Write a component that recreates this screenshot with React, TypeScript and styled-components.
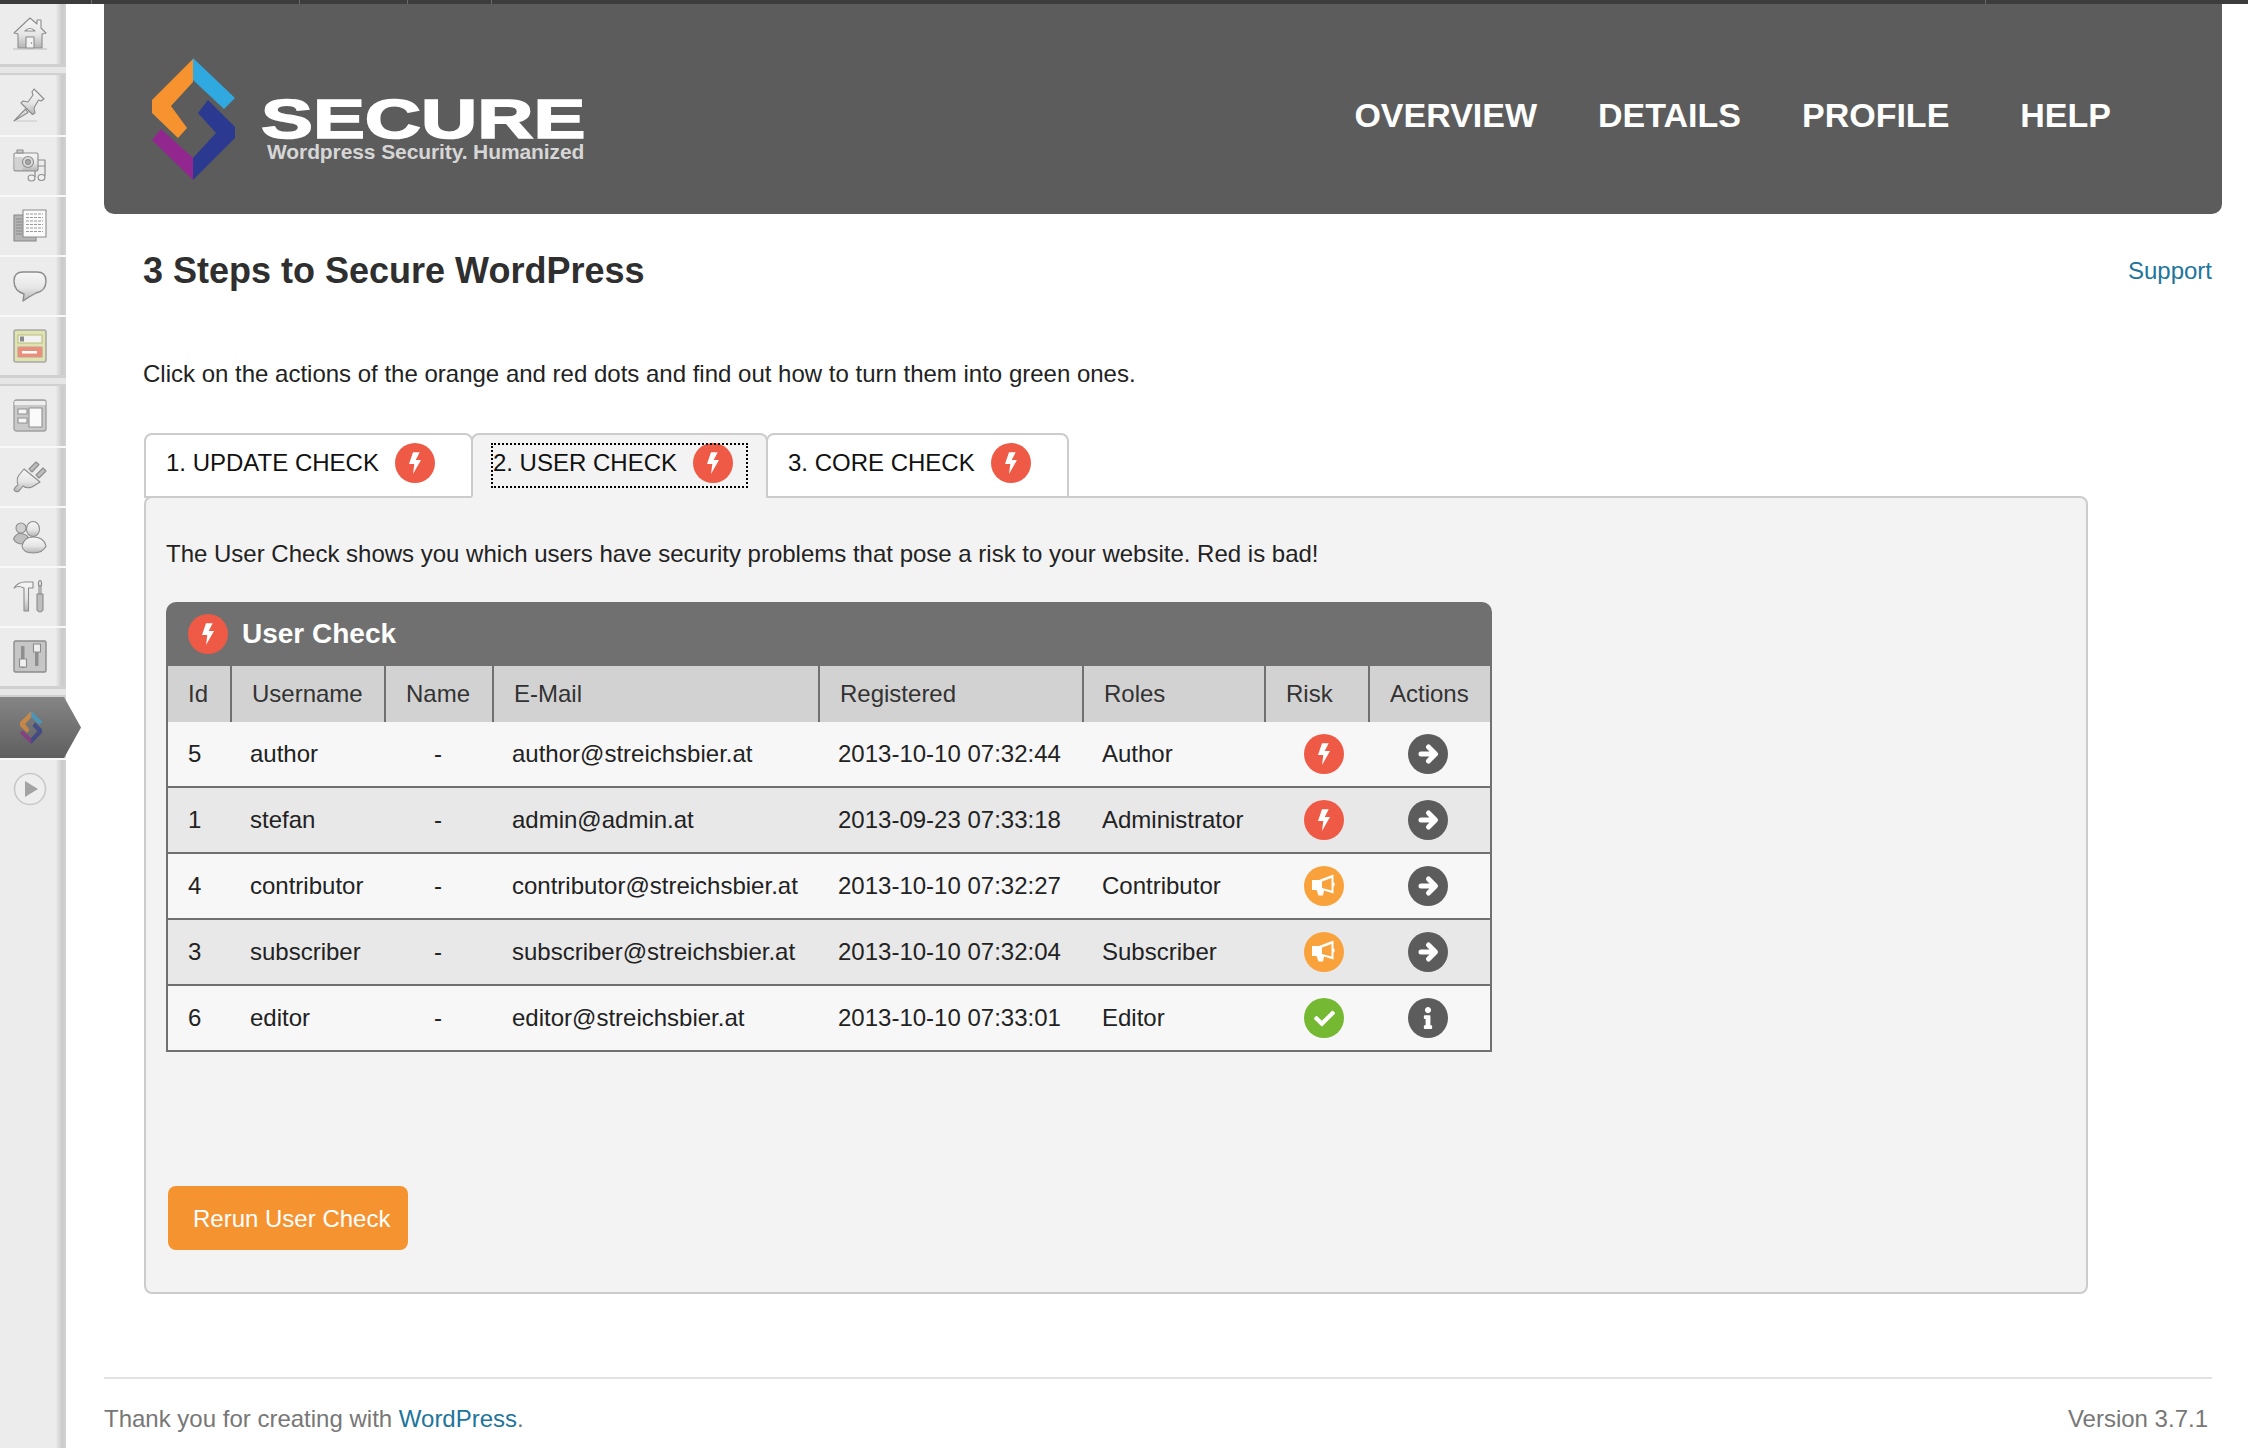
import * as React from 'react';
import styled, { createGlobalStyle } from 'styled-components';
import { FaCheck, FaInfo } from 'react-icons/fa';

const GlobalStyle = createGlobalStyle`
  html, body { margin: 0; padding: 0; background: #fff; }
  body { font-family: "Liberation Sans", Arial, sans-serif; font-size: 24px; color: #333; }
  * { box-sizing: border-box; }
`;

const logoParts = [
  { fill: '#f6932f', points: '193,59 193,82 171,106 187,128 178,138 152,113 152,100' },
  { fill: '#2fa9e0', points: '193,58 235,98 224,109 193,80' },
  { fill: '#2b3990', points: '208,100 235,127 235,138 193,180 193,158 216,133 198,113' },
  { fill: '#92278f', points: '161,129 193,158 193,180 152,140' },
];

const LogoMark = ({ size, muted }: { size: number; muted?: boolean }) => (
  <svg width={(size * 83) / 122} height={size} viewBox="152 58 83 122" opacity={muted ? 0.62 : 1}>
    {logoParts.map((p) => (
      <polygon key={p.fill} fill={p.fill} points={p.points} />
    ))}
  </svg>
);

const Ico = ({ children }: { children: React.ReactNode }) => (
  <svg width={34} height={34} viewBox="0 0 34 34" fill="url(#shade)" stroke="#8c8c8c" strokeWidth="1.1" strokeLinejoin="round">
    {children}
  </svg>
);

const HomeIcon = () => (
  <Ico>
    <defs>
      <linearGradient id="shade" x1="0" y1="0" x2="0" y2="1">
        <stop offset="0" stopColor="#f6f6f6" />
        <stop offset="0.55" stopColor="#e6e6e6" />
        <stop offset="1" stopColor="#b4b4b4" />
      </linearGradient>
    </defs>
    <path d="M1 16 L17 1 L24 7 V3 H28 V11 L33 16 L29 17 V31 H5 V17 Z" />
    <path d="M12 14 Q17 9 22 14 Z" fill="#fff" />
    <rect x="13" y="20" width="8" height="11" fill="#f2f2f2" />
    <circle cx="18.5" cy="26" r="0.7" fill="#777" stroke="none" />
    <path d="M0 32 H34" stroke="#bbb" />
  </Ico>
);
const PinIcon = () => (
  <Ico>
    <path d="M21 1 L31 11 L28 13 L25.5 12 L21 20 L22 25 L19.5 26.5 L8 15 L10 13 L15 14 L20 7 L19 4 Z" />
    <path d="M12.5 21 L1 33 L15 24.5 Z" fill="#dcdcdc" />
    <path d="M3 33 H24" stroke="#ccc" />
  </Ico>
);
const MediaIcon = () => (
  <Ico>
    <path d="M22 11 H32 V27 M22 17 H32 M22 19 V28" fill="none" strokeWidth="1.2" />
    <ellipse cx="18.5" cy="29" rx="3.4" ry="3" fill="#f0f0f0" />
    <ellipse cx="28.5" cy="28.5" rx="3.4" ry="3" fill="#f0f0f0" />
    <rect x="1" y="4" width="24" height="18" rx="1.5" />
    <rect x="4" y="1" width="6" height="3" fill="#ccc" />
    <rect x="1.5" y="8" width="8" height="13" fill="#d2d2d2" stroke="none" />
    <circle cx="15" cy="13" r="5.5" fill="#d8d8d8" />
    <circle cx="15" cy="13" r="2.4" fill="#aaa" />
  </Ico>
);
const PagesIcon = () => (
  <Ico>
    <rect x="1" y="6" width="22" height="26" fill="#b4b4b4" stroke="#888" />
    <path d="M3 10 H9 M3 13 H9 M3 16 H9 M3 19 H9 M3 22 H9 M3 25 H9" stroke="#8a8a8a" />
    <rect x="10" y="1" width="23" height="27" fill="#fbfbfb" />
    <path d="M13 5 H30 M13 8.5 H30 M13 12 H30 M13 15.5 H30 M13 19 H30 M13 22.5 H30" stroke="#9a9a9a" strokeDasharray="3 1" />
  </Ico>
);
const CommentIcon = () => (
  <Ico>
    <path d="M10 3 H24 Q33 3 33 12 Q33 22 23 24 L16 28 L10 32 L11 25 Q1 22 1 12 Q1 3 10 3 Z" strokeWidth="1.4" />
  </Ico>
);
const FormsIcon = () => (
  <Ico>
    <rect x="1" y="1" width="32" height="32" rx="2" fill="#dfe3ae" stroke="#a8a8a8" strokeWidth="1.6" />
    <rect x="5" y="6" width="24" height="8" fill="#f2f2f2" stroke="#b9bd80" />
    <rect x="7" y="7.5" width="4" height="5" fill="#888" stroke="none" />
    <rect x="5" y="18" width="24" height="10" fill="#ec8f7a" stroke="#c99" />
    <rect x="9" y="22" width="15" height="2.5" fill="#fff" stroke="none" />
  </Ico>
);
const AppearanceIcon = () => (
  <Ico>
    <rect x="1" y="1" width="32" height="31" rx="2.5" fill="#c9c9c9" stroke="#a0a0a0" strokeWidth="1.4" />
    <rect x="1.5" y="2" width="31" height="4" fill="#eee" stroke="none" />
    <rect x="5" y="10" width="9" height="5" fill="#f6f6f6" stroke="#8f8f8f" />
    <rect x="5" y="19" width="9" height="5" fill="#f6f6f6" stroke="#8f8f8f" />
    <rect x="16" y="9" width="13" height="19" fill="#fafafa" stroke="#8f8f8f" />
  </Ico>
);
const PluginIcon = () => (
  <Ico>
    <path d="M16 9 L23 2 L26 4.5 L19 12 Z M23 15 L30 8 L33 11 L26 18 Z" fill="#bdbdbd" />
    <path d="M11 9 L27 22 L19 27 Q14 29 10 26 L6 31 Q3 33 1 30 Q1 28 5 25 Q3 19 6 15 Z" />
  </Ico>
);
const UsersIcon = () => (
  <Ico>
    <circle cx="8" cy="8" r="5" fill="#cfcfcf" />
    <path d="M0.5 19 Q3 13 8 13.5 Q13 14 15 17 L10 24 Q3 24 0.5 19 Z" fill="#bfbfbf" />
    <ellipse cx="20" cy="9" rx="6.5" ry="7.5" />
    <path d="M9 26 Q11 17 20 17 Q31 17 33 26 Q30 33 20 33 Q10 33 9 26 Z" />
  </Ico>
);
const ToolsIcon = () => (
  <Ico>
    <path d="M1 8 Q5 2 12 2 H20 V8 H15.5 V31 H11 V8 Q5 5 1 8 Z" />
    <ellipse cx="27" cy="3.5" rx="1.6" ry="3" fill="#ddd" />
    <rect x="26" y="6" width="2" height="8" fill="#ddd" />
    <path d="M24 14 H30 V30 Q27 34 24 30 Z" fill="#bdbdbd" />
  </Ico>
);
const SettingsIcon = () => (
  <Ico>
    <rect x="1" y="1" width="32" height="31" rx="1.5" fill="#c6c6c6" stroke="#8c8c8c" strokeWidth="1.4" />
    <rect x="8" y="6" width="3.5" height="22" fill="#8e8e8e" stroke="none" />
    <rect x="22" y="6" width="3.5" height="20" fill="#8e8e8e" stroke="none" />
    <rect x="6.5" y="19" width="7" height="8" fill="#efefef" />
    <rect x="20.5" y="4" width="7" height="8" fill="#efefef" />
  </Ico>
);
const PlayIcon = () => (
  <Ico>
    <circle cx="17" cy="17" r="15.5" fill="#eee" stroke="#c9c9c9" strokeWidth="1.6" />
    <path d="M12 9 L25 17 L12 25 Z" fill="#a3a3a3" stroke="none" />
  </Ico>
);

const Sidebar = styled.aside`
  width: 66px;
  flex: none;
  display: flex;
  flex-direction: column;
  background: linear-gradient(to right, #ececec 84%, #cacaca 94%, #d2d2d2 100%);
`;
const MenuItem = styled.div<{ $first?: boolean }>`
  height: 60px;
  display: flex;
  align-items: center;
  padding-left: 13px;
  border-top: ${(p) => (p.$first ? 'none' : '2px solid #f8f8f8')};
`;
const MenuGap = styled.div`
  height: 11px;
  background: #e6e6e6;
  border-top: 3px solid #d0d0d0;
  border-bottom: 2px solid #d0d0d0;
`;
const ActiveItem = styled.div`
  width: 81px;
  height: 61px;
  flex: none;
  display: flex;
  align-items: center;
  padding-left: 20px;
  background: linear-gradient(#858585, #5f5f5f);
  clip-path: polygon(0 0, 64px 0, 100% 50%, 64px 100%, 0 100%);
`;

const Page = styled.div`
  width: 2248px;
  height: 1448px;
  overflow: hidden;
  display: flex;
  flex-direction: column;
`;
const TopBar = styled.div`
  height: 4px;
  flex: none;
  background: #3c3c3c;
  display: grid;
  grid-template-columns: 92px 208px 108px 84px 1494px 1fr;
`;
const TopCell = styled.span`
  border-right: 1px solid #6a6a6a;
`;
const Columns = styled.div`
  flex: 1;
  display: flex;
`;
const Main = styled.main`
  flex: 1;
  padding: 0 26px 0 38px;
  display: flex;
  flex-direction: column;
`;
const Banner = styled.header`
  height: 210px;
  flex: none;
  background: #5c5c5c;
  border-radius: 0 0 10px 10px;
  display: flex;
  align-items: flex-start;
  justify-content: space-between;
  padding: 54px 111px 0 48px;
`;
const Brand = styled.div`
  display: flex;
  gap: 26px;
`;
const BrandText = styled.div`
  padding-top: 39px;
  color: #fff;
`;
const BrandName = styled.div`
  font-weight: 700;
  font-size: 56px;
  line-height: 44px;
  height: 44px;
  transform: scaleX(1.39);
  transform-origin: left center;
  -webkit-text-stroke: 1.6px #fff;
  white-space: nowrap;
`;
const BrandTag = styled.div`
  font-size: 21px;
  font-weight: 700;
  line-height: 22px;
  margin-left: 6px;
  color: #d6d6d6;
  letter-spacing: -0.1px;
  white-space: nowrap;
`;
const Nav = styled.nav`
  display: flex;
  padding-top: 37px;
  gap: 61px;
`;
const NavLink = styled.a<{ $gap?: number }>`
  font-size: 34px;
  font-weight: 700;
  line-height: 40px;
  color: #fff;
  margin-left: ${(p) => p.$gap ?? 0}px;
`;
const Content = styled.div`
  padding-left: 39px;
`;
const TitleRow = styled.div`
  display: flex;
  align-items: center;
  justify-content: space-between;
  height: 56px;
  margin-top: 29px;
`;
const Title = styled.h1`
  margin: 0;
  font-size: 36px;
  font-weight: 700;
  color: #2f2f2f;
`;
const Support = styled.a`
  font-size: 24px;
  color: #21759b;
  margin-right: 10px;
`;
const Lead = styled.p`
  margin: 59px 0 0;
  line-height: 32px;
  color: #222;
`;
const TabRow = styled.div`
  display: flex;
  margin-top: 43px;
  position: relative;
  z-index: 1;
  margin-bottom: -2px;
  margin-left: 1px;
`;
const Tab = styled.div<{ $active?: boolean }>`
  height: 65px;
  padding: 8px ${(p) => (p.$active ? 18 : 20)}px 0 18px;
  border: 2px solid #ccc;
  border-bottom-color: ${(p) => (p.$active ? '#f3f3f3' : '#ccc')};
  border-radius: 8px 8px 0 0;
  margin-right: -2px;
  background: ${(p) => (p.$active ? '#f3f3f3' : '#fff')};
  display: flex;
  color: #111;
`;
const TabLabel = styled.a<{ $focus?: boolean }>`
  display: flex;
  align-items: center;
  gap: 16px;
  height: 45px;
  padding: 0 ${(p) => (p.$focus ? 15 : 16)}px 5px 2px;
  outline: ${(p) => (p.$focus ? '2px dotted #000' : 'none')};
  outline-offset: -2px;
`;
const Panel = styled.section`
  width: 1944px;
  height: 798px;
  background: #f3f3f3;
  border: 2px solid #ccc;
  border-radius: 8px;
  padding: 40px 20px 0;
  margin-left: 1px;
`;
const PanelText = styled.p`
  margin: 0;
  line-height: 32px;
  color: #222;
`;
const Card = styled.div`
  width: 1326px;
  margin-top: 32px;
  border-radius: 10px 10px 0 0;
  overflow: hidden;
`;
const CardHead = styled.div`
  height: 64px;
  background: #707070;
  display: flex;
  align-items: center;
  gap: 14px;
  padding-left: 22px;
  color: #fff;
  font-size: 28px;
  font-weight: 700;
`;
const UserTable = styled.table`
  width: 100%;
  table-layout: fixed;
  border-collapse: separate;
  border-spacing: 0;
  border-left: 2px solid #707070;
  border-right: 2px solid #707070;
`;
const HeadCell = styled.th<{ $first?: boolean }>`
  height: 56px;
  padding: 0 0 0 20px;
  text-align: left;
  font-weight: 400;
  color: #333;
  background: #d2d2d2;
  border-left: ${(p) => (p.$first ? 'none' : '2px solid #707070')};
`;
const Row = styled.tr<{ $even?: boolean }>`
  background: ${(p) => (p.$even ? '#e8e8e8' : '#f7f7f7')};
`;
const Cell = styled.td<{ $pad?: number }>`
  height: 66px;
  padding: 0 0 0 ${(p) => p.$pad ?? 20}px;
  color: #222;
  border-bottom: 2px solid #707070;
  white-space: nowrap;
`;
const Dot = styled.span<{ $color: string }>`
  width: 40px;
  height: 40px;
  flex: none;
  border-radius: 50%;
  background: ${(p) => p.$color};
  color: #fff;
  display: inline-flex;
  align-items: center;
  justify-content: center;
  vertical-align: middle;
`;
const RunButton = styled.a`
  display: flex;
  align-items: center;
  width: 240px;
  height: 64px;
  margin: 134px 0 0 2px;
  padding: 2px 0 0 25px;
  background: #f69331;
  border-radius: 8px;
  color: #fff;
  white-space: nowrap;
`;
const Footer = styled.footer`
  margin-top: 83px;
  margin-right: 10px;
  border-top: 2px solid #e2e2e2;
  display: flex;
  justify-content: space-between;
  padding: 24px 4px 0 0;
  color: #777;
  line-height: 32px;
`;
const FooterLink = styled.a`
  color: #21759b;
`;

const RED = '#ee5a45';
const ORANGE = '#f9a13a';
const GREEN = '#75b832';
const DARK = '#5c5c5c';

const BoltDot = () => (
  <Dot $color={RED}>
    <svg width="40" height="40" viewBox="0 0 40 40" fill="#fff">
      <polygon points="18,9.3 14,21 19.3,21 18,31 26,17 20.7,17 24.7,9.3" />
    </svg>
  </Dot>
);
const HornDot = () => (
  <Dot $color={ORANGE}>
    <svg width="40" height="40" viewBox="0 0 40 40" fill="#fff" fillRule="evenodd">
      <path d="M8 14 H15 L29.5 8.5 V16 Q32 18 29.5 21 V27.5 L20 24.5 L19 29.5 H14.5 L12.5 24 H8 Z M18 15.5 L27.5 12 V24.5 L18 22 Z" />
    </svg>
  </Dot>
);
const OkDot = () => (
  <Dot $color={GREEN}>
    <FaCheck size={21} />
  </Dot>
);
const GoDot = () => (
  <Dot $color={DARK}>
    <svg width="40" height="40" viewBox="0 0 40 40" fill="none" stroke="#fff" strokeWidth="5" strokeLinecap="round" strokeLinejoin="round">
      <path d="M13 20 H27 M20.5 13 L27.5 20 L20.5 27" />
    </svg>
  </Dot>
);
const InfoDot = () => (
  <Dot $color={DARK}>
    <FaInfo size={22} />
  </Dot>
);

const columns = [62, 154, 108, 326, 264, 182, 104, 122];
const headers = ['Id', 'Username', 'Name', 'E-Mail', 'Registered', 'Roles', 'Risk', 'Actions'];
const users = [
  { id: 5, name: 'author', mail: 'author@streichsbier.at', date: '2013-10-10 07:32:44', role: 'Author', risk: <BoltDot />, action: <GoDot /> },
  { id: 1, name: 'stefan', mail: 'admin@admin.at', date: '2013-09-23 07:33:18', role: 'Administrator', risk: <BoltDot />, action: <GoDot /> },
  { id: 4, name: 'contributor', mail: 'contributor@streichsbier.at', date: '2013-10-10 07:32:27', role: 'Contributor', risk: <HornDot />, action: <GoDot /> },
  { id: 3, name: 'subscriber', mail: 'subscriber@streichsbier.at', date: '2013-10-10 07:32:04', role: 'Subscriber', risk: <HornDot />, action: <GoDot /> },
  { id: 6, name: 'editor', mail: 'editor@streichsbier.at', date: '2013-10-10 07:33:01', role: 'Editor', risk: <OkDot />, action: <InfoDot /> },
];

export default function App() {
  return (
    <Page>
      <GlobalStyle />
      <TopBar>
        <TopCell />
        <TopCell />
        <TopCell />
        <TopCell />
        <TopCell />
      </TopBar>
      <Columns>
        <Sidebar>
          <MenuItem $first><HomeIcon /></MenuItem>
          <MenuGap />
          <MenuItem $first><PinIcon /></MenuItem>
          <MenuItem><MediaIcon /></MenuItem>
          <MenuItem><PagesIcon /></MenuItem>
          <MenuItem><CommentIcon /></MenuItem>
          <MenuItem><FormsIcon /></MenuItem>
          <MenuGap />
          <MenuItem $first><AppearanceIcon /></MenuItem>
          <MenuItem><PluginIcon /></MenuItem>
          <MenuItem><UsersIcon /></MenuItem>
          <MenuItem><ToolsIcon /></MenuItem>
          <MenuItem><SettingsIcon /></MenuItem>
          <MenuGap />
          <ActiveItem><LogoMark size={33} muted /></ActiveItem>
          <MenuItem><PlayIcon /></MenuItem>
        </Sidebar>
        <Main>
          <Banner>
            <Brand>
              <LogoMark size={122} />
              <BrandText>
                <BrandName>SECURE</BrandName>
                <BrandTag>Wordpress Security. Humanized</BrandTag>
              </BrandText>
            </Brand>
            <Nav>
              <NavLink>OVERVIEW</NavLink>
              <NavLink>DETAILS</NavLink>
              <NavLink>PROFILE</NavLink>
              <NavLink $gap={10}>HELP</NavLink>
            </Nav>
          </Banner>
          <Content>
            <TitleRow>
              <Title>3 Steps to Secure WordPress</Title>
              <Support>Support</Support>
            </TitleRow>
            <Lead>Click on the actions of the orange and red dots and find out how to turn them into green ones.</Lead>
            <TabRow>
              <Tab><TabLabel>1. UPDATE CHECK <BoltDot /></TabLabel></Tab>
              <Tab $active><TabLabel $focus>2. USER CHECK <BoltDot /></TabLabel></Tab>
              <Tab><TabLabel>3. CORE CHECK <BoltDot /></TabLabel></Tab>
            </TabRow>
            <Panel>
              <PanelText>The User Check shows you which users have security problems that pose a risk to your website. Red is bad!</PanelText>
              <Card>
                <CardHead><BoltDot />User Check</CardHead>
                <UserTable>
                  <colgroup>
                    {columns.map((w, i) => (
                      <col key={i} width={w} />
                    ))}
                  </colgroup>
                  <thead>
                    <tr>
                      {headers.map((h, i) => (
                        <HeadCell key={h} $first={i === 0}>{h}</HeadCell>
                      ))}
                    </tr>
                  </thead>
                  <tbody>
                    {users.map((u, i) => (
                      <Row key={u.id} $even={i % 2 === 1}>
                        <Cell>{u.id}</Cell>
                        <Cell>{u.name}</Cell>
                        <Cell $pad={50}>-</Cell>
                        <Cell>{u.mail}</Cell>
                        <Cell>{u.date}</Cell>
                        <Cell>{u.role}</Cell>
                        <Cell $pad={40}>{u.risk}</Cell>
                        <Cell $pad={40}>{u.action}</Cell>
                      </Row>
                    ))}
                  </tbody>
                </UserTable>
              </Card>
              <RunButton>Rerun User Check</RunButton>
            </Panel>
          </Content>
          <Footer>
            <span>Thank you for creating with <FooterLink>WordPress</FooterLink>.</span>
            <span>Version 3.7.1</span>
          </Footer>
        </Main>
      </Columns>
    </Page>
  );
}
